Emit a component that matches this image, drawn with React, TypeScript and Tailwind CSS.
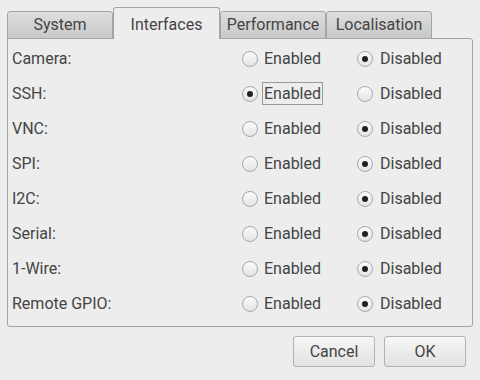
const TABS = ["System", "Interfaces", "Performance", "Localisation"]

const ROWS: { label: string; enabled: boolean; focus?: boolean }[] = [
  { label: "Camera:", enabled: false },
  { label: "SSH:", enabled: true, focus: true },
  { label: "VNC:", enabled: false },
  { label: "SPI:", enabled: false },
  { label: "I2C:", enabled: false },
  { label: "Serial:", enabled: false },
  { label: "1-Wire:", enabled: false },
  { label: "Remote GPIO:", enabled: false },
]

function Radio({ checked }: { checked: boolean }) {
  return (
    <span className="w-[16px] h-[16px] rounded-full border border-[#a8a8a8] bg-gradient-to-b from-[#fbfbfb] to-[#e4e4e4] flex items-center justify-center shrink-0">
      {checked && <span className="w-[6px] h-[6px] rounded-full bg-[#202020]" />}
    </span>
  )
}

export default function App() {
  return (
    <div
      className="w-[480px] h-[380px] bg-[#ededed] text-[#444] text-[16px] pt-[7px] px-[7px] flex flex-col"
      style={{ fontFamily: "Roboto, 'Liberation Sans', sans-serif" }}
    >
      {/* TABS */}
      <div className="flex items-end h-[32px] -mb-px relative z-10">
        {TABS.map((t) =>
          t === "Interfaces" ? (
            <div
              key={t}
              className="w-[107px] h-[32px] border border-b-0 border-[#a4a4a4] rounded-t-[3px] bg-[#ededed] flex items-center justify-center pt-[2px]"
            >
              {t}
            </div>
          ) : (
            <div
              key={t}
              className="w-[106px] h-[28px] border border-[#a4a4a4] rounded-t-[3px] bg-gradient-to-b from-[#dedede] to-[#c9c9c9] flex items-center justify-center"
            >
              {t}
            </div>
          )
        )}
      </div>

      {/* PANEL */}
      <div className="w-[466px] h-[289px] border border-[#a4a4a4] rounded-b-[3px] rounded-tr-[3px] pt-[2px] pl-[4px]">
        {ROWS.map((r) => (
          <div key={r.label} className="h-[35px] flex items-center">
            <div className="w-[230px]">{r.label}</div>
            <div className="w-[115px] flex items-center">
              <Radio checked={r.enabled} />
              <span
                className={`ml-[4px] px-[1px] leading-[21px] border ${
                  r.focus ? "border-[#9a9a9a]" : "border-transparent"
                }`}
              >
                Enabled
              </span>
            </div>
            <div className="flex items-center">
              <Radio checked={!r.enabled} />
              <span className="ml-[5px] px-[1px] leading-[21px] border border-transparent">Disabled</span>
            </div>
          </div>
        ))}
      </div>

      {/* ACTIONS */}
      <div className="flex justify-end gap-[9px] mt-[9px] pr-[7px]">
        <button className="w-[82px] h-[31px] border border-[#b2b2b2] rounded-[3px] bg-gradient-to-b from-[#f6f6f6] to-[#e2e2e2] text-[#444]">
          Cancel
        </button>
        <button className="w-[82px] h-[31px] border border-[#b2b2b2] rounded-[3px] bg-gradient-to-b from-[#f6f6f6] to-[#e2e2e2] text-[#444]">
          OK
        </button>
      </div>
    </div>
  )
}
